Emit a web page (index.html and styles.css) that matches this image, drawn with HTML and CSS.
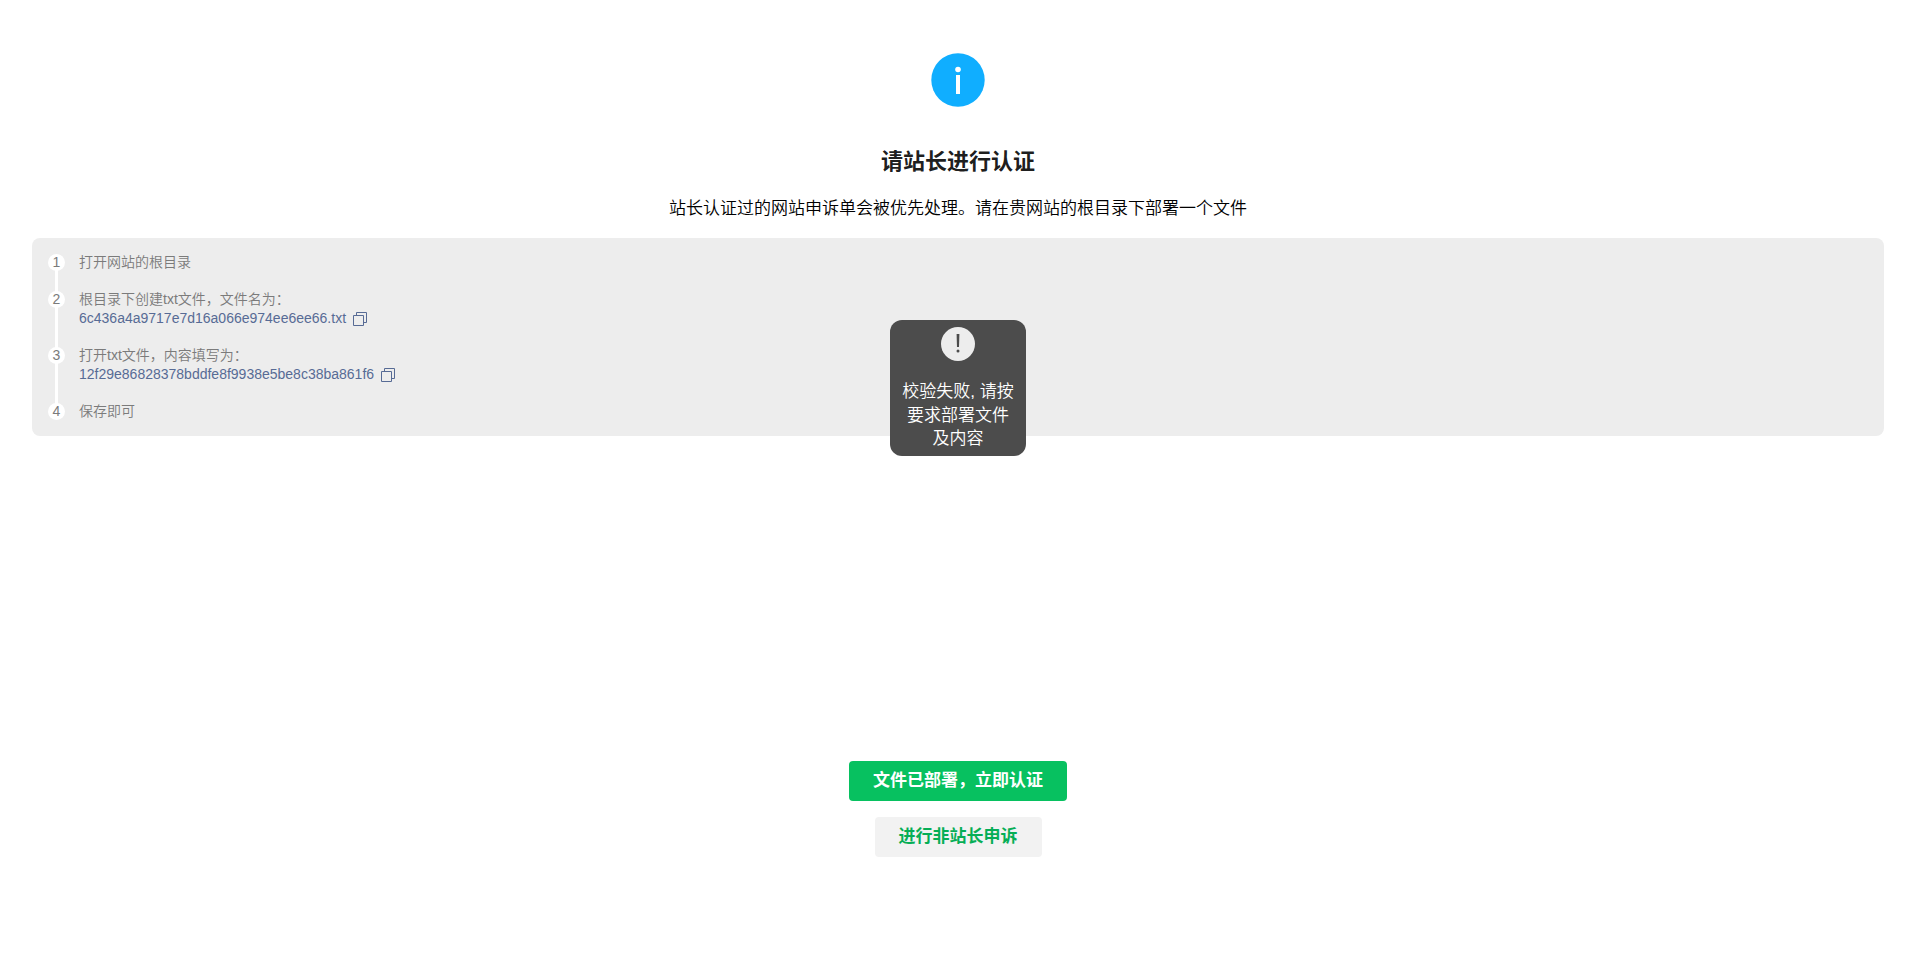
FILE: index.html
```html
<!DOCTYPE html>
<html lang="zh-CN">
<head>
  <meta charset="UTF-8">
  <meta name="viewport" content="width=device-width, initial-scale=1.0">
  <title>站长认证</title>
  <link rel="stylesheet" href="styles.css">
</head>
<body>
  <div class="msg">
    <div class="msg-icon">
      <svg width="54" height="54" viewBox="0 0 54 54">
        <circle cx="27" cy="27" r="26.7" fill="#10aeff"/>
        <circle cx="27" cy="16.5" r="2.8" fill="#fff"/>
        <path d="M25 22h4v19h-4z" fill="#fff"/>
      </svg>
    </div>
    <h2 class="msg-title">请站长进行认证</h2>
    <p class="msg-desc">站长认证过的网站申诉单会被优先处理。请在贵网站的根目录下部署一个文件</p>

    <ol class="steps">
      <li class="step">
        <span class="step-num">1</span>
        <div class="step-text">打开网站的根目录</div>
      </li>
      <li class="step">
        <span class="step-num">2</span>
        <div class="step-text">
          <div>根目录下创建txt文件，文件名为：</div>
          <a class="copy">6c436a4a9717e7d16a066e974ee6ee66.txt<svg class="copy-icon" width="14" height="14" viewBox="0 0 14 14"><path d="M.5 3.5h10v10H.5zM3.5 3.5v-3h10v10h-3" fill="none" stroke="currentColor"/></svg></a>
        </div>
      </li>
      <li class="step">
        <span class="step-num">3</span>
        <div class="step-text">
          <div>打开txt文件，内容填写为：</div>
          <a class="copy">12f29e86828378bddfe8f9938e5be8c38ba861f6<svg class="copy-icon" width="14" height="14" viewBox="0 0 14 14"><path d="M.5 3.5h10v10H.5zM3.5 3.5v-3h10v10h-3" fill="none" stroke="currentColor"/></svg></a>
        </div>
      </li>
      <li class="step">
        <span class="step-num">4</span>
        <div class="step-text">保存即可</div>
      </li>
    </ol>

    <div class="btn-area">
      <a class="btn btn-primary">文件已部署，立即认证</a>
      <a class="btn btn-default">进行非站长申诉</a>
    </div>
  </div>

  <div class="toast">
    <svg class="toast-icon" width="34" height="34" viewBox="0 0 34 34">
      <circle cx="17" cy="17" r="17" fill="#ededed"/>
      <path d="M15.6 7h2.8l-.4 13h-2z" fill="#4c4c4c"/>
      <circle cx="17" cy="24.1" r="1.5" fill="#4c4c4c"/>
    </svg>
    <p class="toast-text">校验失败, 请按要求部署文件及内容</p>
  </div>
</body>
</html>
```
FILE: styles.css
```css
* {
  box-sizing: border-box;
  margin: 0;
  padding: 0;
}

body {
  font-family: "Liberation Sans", "Noto Sans CJK SC", sans-serif;
  font-size: 17px;
  color: rgba(0, 0, 0, 0.9);
  background: #fff;
}

.msg {
  display: flex;
  flex-direction: column;
  height: 100vh;
  padding: 53px 32px 112px;
  text-align: center;
}

.msg-icon {
  height: 54px;
}

.msg-icon svg {
  display: block;
  margin: 0 auto;
}

.msg-title {
  margin-top: 39px;
  font-size: 22px;
  line-height: 32px;
  font-weight: 700;
}

.msg-desc {
  margin-top: 19px;
  line-height: 24px;
  font-weight: 350;
  color: #000;
}

.steps {
  margin-top: 17px;
  padding: 15px 16px;
  border-radius: 8px;
  background: #ededed;
  list-style: none;
  text-align: left;
  font-size: 14px;
  font-weight: 350;
  line-height: 19px;
  color: #7b7b7b;
}

.step {
  position: relative;
  display: flex;
  gap: 14px;
  padding-bottom: 18px;
}

.step:last-child {
  padding-bottom: 0;
}

/* line joining the numbers */
.step:not(:last-child)::before {
  content: "";
  position: absolute;
  top: 10px;
  bottom: -9px;
  left: 7px;
  width: 3px;
  background: #fff;
}

.step-num {
  position: relative;
  z-index: 1;
  flex: none;
  width: 17px;
  height: 17px;
  margin-top: 1px;
  border-radius: 50%;
  background: #fff;
  line-height: 17px;
  text-align: center;
}

.copy {
  display: flex;
  align-items: center;
  color: #576b95;
}

.copy-icon {
  margin-left: 7px;
}

.btn-area {
  display: flex;
  flex-direction: column;
  align-items: center;
  gap: 16px;
  margin-top: auto;
}

.btn {
  padding: 0 24px;
  border-radius: 4px;
  font-weight: 700;
  line-height: 40px;
}

.btn-primary {
  color: #fff;
  background: #07c160;
}

.btn-default {
  color: #06ae56;
  background: #f2f2f2;
}

.toast {
  position: fixed;
  top: 320px;
  left: 50%;
  width: 136px;
  height: 136px;
  margin-left: -68px;
  padding: 7px 12px 0;
  border-radius: 12px;
  background: #4c4c4c;
  color: #fff;
  text-align: center;
}

.toast-icon {
  display: block;
  margin: 0 auto 19px;
}

.toast-text {
  margin: 0 -1px;
  font-weight: 350;
  line-height: 23.6px;
}
```
